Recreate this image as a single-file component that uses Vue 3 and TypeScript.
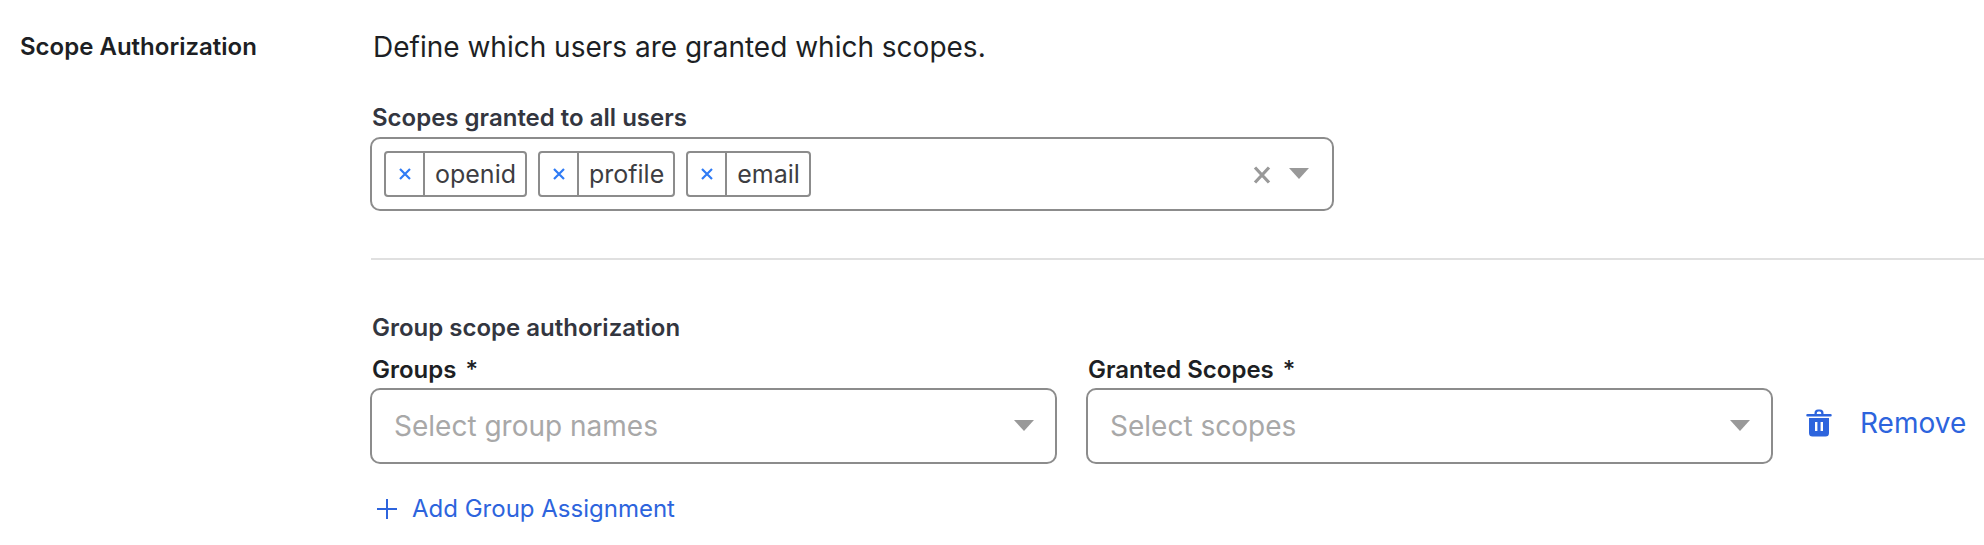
<script setup lang="ts">
const scopes = ['openid', 'profile', 'email']

const fields = [
  { id: 'groups', label: 'Groups', placeholder: 'Select group names' },
  { id: 'scopes', label: 'Granted Scopes', placeholder: 'Select scopes' },
]
</script>

<template>
  <div class="page">
    <div class="side-title">Scope Authorization</div>
    <div class="content">
      <p class="intro">Define which users are granted which scopes.</p>

      <div class="field-label all-users">Scopes granted to all users</div>
      <div class="multi-select">
        <div class="chips">
          <div v-for="scope in scopes" :key="scope" class="chip">
            <span class="chip-remove">
              <svg width="14" height="14" viewBox="0 0 14 14">
                <path d="M2 2l10 10M12 2L2 12" stroke="#2f7bf5" stroke-width="2.2" fill="none" />
              </svg>
            </span>
            <span class="chip-text">{{ scope }}</span>
          </div>
        </div>
        <svg class="clear-icon" width="18" height="20" viewBox="0 0 18 20">
          <path d="M2 2.500l14 15M16 2.500l-14 15" stroke="#999" stroke-width="3.200" fill="none" />
        </svg>
        <span class="caret"></span>
      </div>

      <div class="divider"></div>

      <div class="field-label section-label">Group scope authorization</div>
      <div class="assignment">
        <div v-for="field in fields" :key="field.id" class="assign-field">
          <div class="field-label required">{{ field.label }} <span class="star">*</span></div>
          <div class="select">
            <span class="placeholder">{{ field.placeholder }}</span>
            <span class="caret"></span>
          </div>
        </div>
        <a class="remove">
          <svg width="26" height="28" viewBox="0 0 26 28">
            <path
              fill="#2d64dd"
              fill-rule="evenodd"
              d="M8.500 5V4A3.500 3.500 0 0 1 12 .5h2A3.500 3.500 0 0 1 17.500 4v1h7a1.250 1.250 0 0 1 0 2.500H1.500a1.250 1.250 0 0 1 0-2.500zM10.800 5h4.400V4A1.500 1.500 0 0 0 13.700 2.500h-1.400A1.500 1.500 0 0 0 10.800 4zM3 9h20v15a3.500 3.500 0 0 1-3.500 3.500h-13A3.500 3.500 0 0 1 3 24zM9 13v9h2.400v-9zM14.600 13v9H17v-9z"
            />
          </svg>
          <span>Remove</span>
        </a>
      </div>

      <a class="add-link">
        <svg width="20" height="20" viewBox="0 0 20 20">
          <path d="M10 0v20M0 10h20" stroke="#2d64dd" stroke-width="2" fill="none" />
        </svg>
        <span>Add Group Assignment</span>
      </a>
    </div>
  </div>
</template>

<style>
html,
body {
  margin: 0;
  background: #fff;
  overflow: hidden;
}
</style>

<style scoped>
.page {
  display: flex;
  width: 1984px;
  height: 545px;
  font-family: Inter, 'Liberation Sans', sans-serif;
  color: #1d1f24;
  box-sizing: border-box;
  padding-top: 32px;
}

.side-title {
  width: 350px;
  margin-left: 20px;
  font-size: 24px;
  font-weight: 600;
  line-height: 30px;
  flex-shrink: 0;
}

.content {
  flex: 1;
  min-width: 0;
}

.intro {
  margin: 0 0 0 3px;
  font-size: 28px;
  line-height: 30px;
}

.field-label {
  font-size: 24px;
  font-weight: 600;
  line-height: 26px;
  margin-left: 2px;
}

.all-users {
  margin-top: 43px;
  margin-bottom: 6px;
  color: #33363f;
}

.multi-select {
  width: 964px;
  height: 74px;
  box-sizing: border-box;
  border: 2px solid #8c8c8c;
  border-radius: 10px;
  display: flex;
  align-items: center;
  padding: 0 12px;
}

.chips {
  display: flex;
  gap: 11px;
  flex: 1;
}

.chip {
  display: flex;
  height: 46px;
  box-sizing: border-box;
  border: 2px solid #8c8c8c;
  border-radius: 4px;
  align-items: stretch;
}

.chip-remove {
  width: 37px;
  display: flex;
  align-items: center;
  justify-content: center;
  border-right: 2px solid #8c8c8c;
}

.chip-text {
  font-size: 25px;
  line-height: 42px;
  padding: 0 9px 0 10px;
  color: #3d3d42;
}

.clear-icon {
  margin-right: 18px;
  margin-top: 2px;
}

.caret {
  width: 0;
  height: 0;
  border-left: 10px solid transparent;
  border-right: 10px solid transparent;
  border-top: 11px solid #999;
  flex-shrink: 0;
  margin-right: 11px;
  margin-top: -2px;
}

.divider {
  height: 2px;
  background: #e0e0e0;
  margin-top: 47px;
  margin-left: 1px;
}

.section-label {
  margin-top: 55px;
  color: #33363f;
}

.assignment {
  display: flex;
  gap: 29px;
  margin-top: 16px;
}

.assign-field {
  width: 687px;
}

.assign-field .field-label {
  margin-bottom: 5px;
}

.star {
  margin-left: 3px;
  font-weight: 500;
}

.select {
  height: 76px;
  box-sizing: border-box;
  border: 2px solid #8c8c8c;
  border-radius: 10px;
  display: flex;
  align-items: center;
  justify-content: space-between;
  padding: 0 10px 0 22px;
}

.placeholder {
  font-size: 28px;
  color: #a8a8a8;
}

.remove {
  display: flex;
  align-items: center;
  gap: 28px;
  margin-left: 4px;
  margin-top: 31px;
  height: 76px;
  color: #2d64dd;
  font-size: 28px;
  line-height: 30px;
  padding-bottom: 7px;
  box-sizing: border-box;
}

.add-link {
  display: flex;
  align-items: center;
  gap: 15px;
  margin-top: 31px;
  margin-left: 7px;
  color: #2d64dd;
  font-size: 24px;
  line-height: 28px;
}
</style>
